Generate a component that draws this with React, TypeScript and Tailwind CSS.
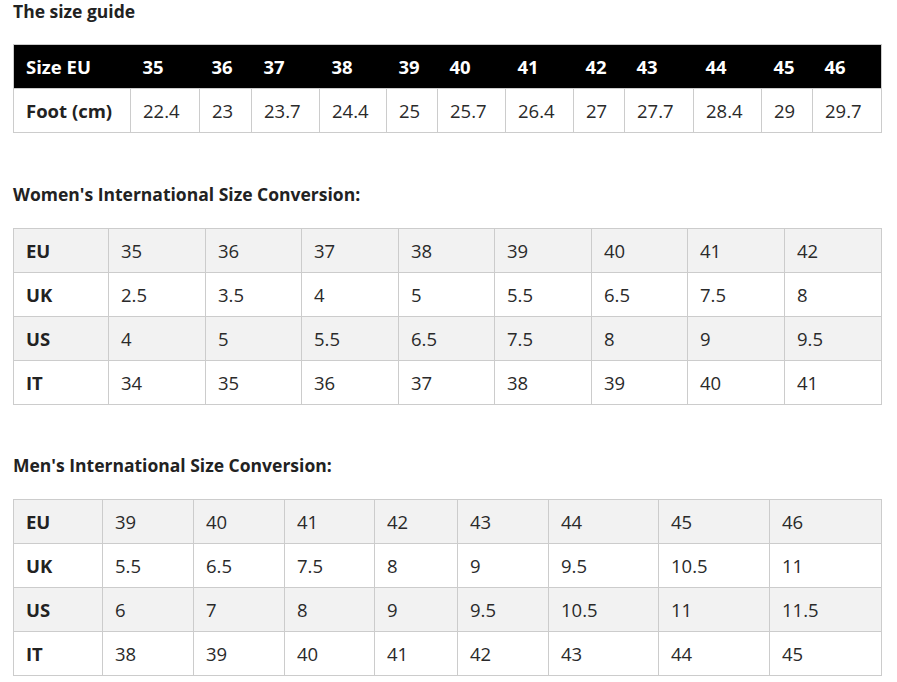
import React from "react";

// tabla principala EU / cm
const SIZE_EU = ["35", "36", "37", "38", "39", "40", "41", "42", "43", "44", "45", "46"];
const FOOT_CM = ["22.4", "23", "23.7", "24.4", "25", "25.7", "26.4", "27", "27.7", "28.4", "29", "29.7"];
const GUIDE_WIDTHS = ["w-[69px]", "w-[52px]", "w-[68px]", "w-[67px]", "w-[51px]", "w-[68px]", "w-[68px]", "w-[51px]", "w-[69px]", "w-[68px]", "w-[51px]", "w-[69px]"];

const WOMEN = [
  ["EU", "35", "36", "37", "38", "39", "40", "41", "42"],
  ["UK", "2.5", "3.5", "4", "5", "5.5", "6.5", "7.5", "8"],
  ["US", "4", "5", "5.5", "6.5", "7.5", "8", "9", "9.5"],
  ["IT", "34", "35", "36", "37", "38", "39", "40", "41"],
];
const WOMEN_WIDTHS = ["w-[95px]", "w-[97px]", "w-[96px]", "w-[97px]", "w-[96px]", "w-[97px]", "w-[96px]", "w-[97px]", "w-[97px]"];

const MEN = [
  ["EU", "39", "40", "41", "42", "43", "44", "45", "46"],
  ["UK", "5.5", "6.5", "7.5", "8", "9", "9.5", "10.5", "11"],
  ["US", "6", "7", "8", "9", "9.5", "10.5", "11", "11.5"],
  ["IT", "38", "39", "40", "41", "42", "43", "44", "45"],
];
const MEN_WIDTHS = ["w-[89px]", "w-[91px]", "w-[91px]", "w-[90px]", "w-[83px]", "w-[91px]", "w-[110px]", "w-[111px]", "w-[112px]"];

function ConversionTable({ rows, widths }: { rows: string[][]; widths: string[] }) {
  return (
    <table className="w-[868px] table-fixed border-collapse border border-[#cccccc]">
      <colgroup>
        {widths.map((w, i) => (
          <col key={i} className={w} />
        ))}
      </colgroup>
      <tbody>
        {rows.map((row, r) => (
          <tr key={r} className={`h-[44px] ${r % 2 === 0 ? "bg-[#f2f2f2]" : "bg-white"}`}>
            {row.map((cell, c) => (
              <td
                key={c}
                className={`border border-[#cccccc] px-3 text-left align-middle ${c === 0 ? "font-bold text-[#222222]" : ""}`}
              >
                {cell}
              </td>
            ))}
          </tr>
        ))}
      </tbody>
    </table>
  );
}

export default function App() {
  return (
    <div className="min-h-screen bg-white px-[13px] text-[18.5px] leading-6 text-[#2a2a2a] [font-family:'Open_Sans',sans-serif]">
      <h2 className="text-[17.5px] font-bold leading-[22px] text-[#222222]">The size guide</h2>

      <table className="mt-[22px] w-[868px] table-fixed border-collapse border border-[#cccccc]">
        <colgroup>
          <col className="w-[117px]" />
          {GUIDE_WIDTHS.map((w, i) => (
            <col key={i} className={w} />
          ))}
        </colgroup>
        <tbody>
          <tr className="h-[44px] bg-black text-white">
            <td className="px-3 font-bold">Size EU</td>
            {SIZE_EU.map((s) => (
              <td key={s} className="px-3 font-bold">{s}</td>
            ))}
          </tr>
          <tr className="h-[44px] bg-white">
            <td className="border border-[#cccccc] px-3 font-bold text-[#222222]">Foot (cm)</td>
            {FOOT_CM.map((f) => (
              <td key={f} className="border border-[#cccccc] px-3">{f}</td>
            ))}
          </tr>
        </tbody>
      </table>

      <h3 className="mt-[49px] text-[17.5px] font-bold leading-6 text-[#222222]">Women's International Size Conversion:</h3>
      <div className="mt-[22px]">
        <ConversionTable rows={WOMEN} widths={WOMEN_WIDTHS} />
      </div>

      <h3 className="mt-[48px] text-[17.5px] font-bold leading-6 text-[#222222]">Men's International Size Conversion:</h3>
      <div className="mt-[22px]">
        <ConversionTable rows={MEN} widths={MEN_WIDTHS} />
      </div>
    </div>
  );
}
